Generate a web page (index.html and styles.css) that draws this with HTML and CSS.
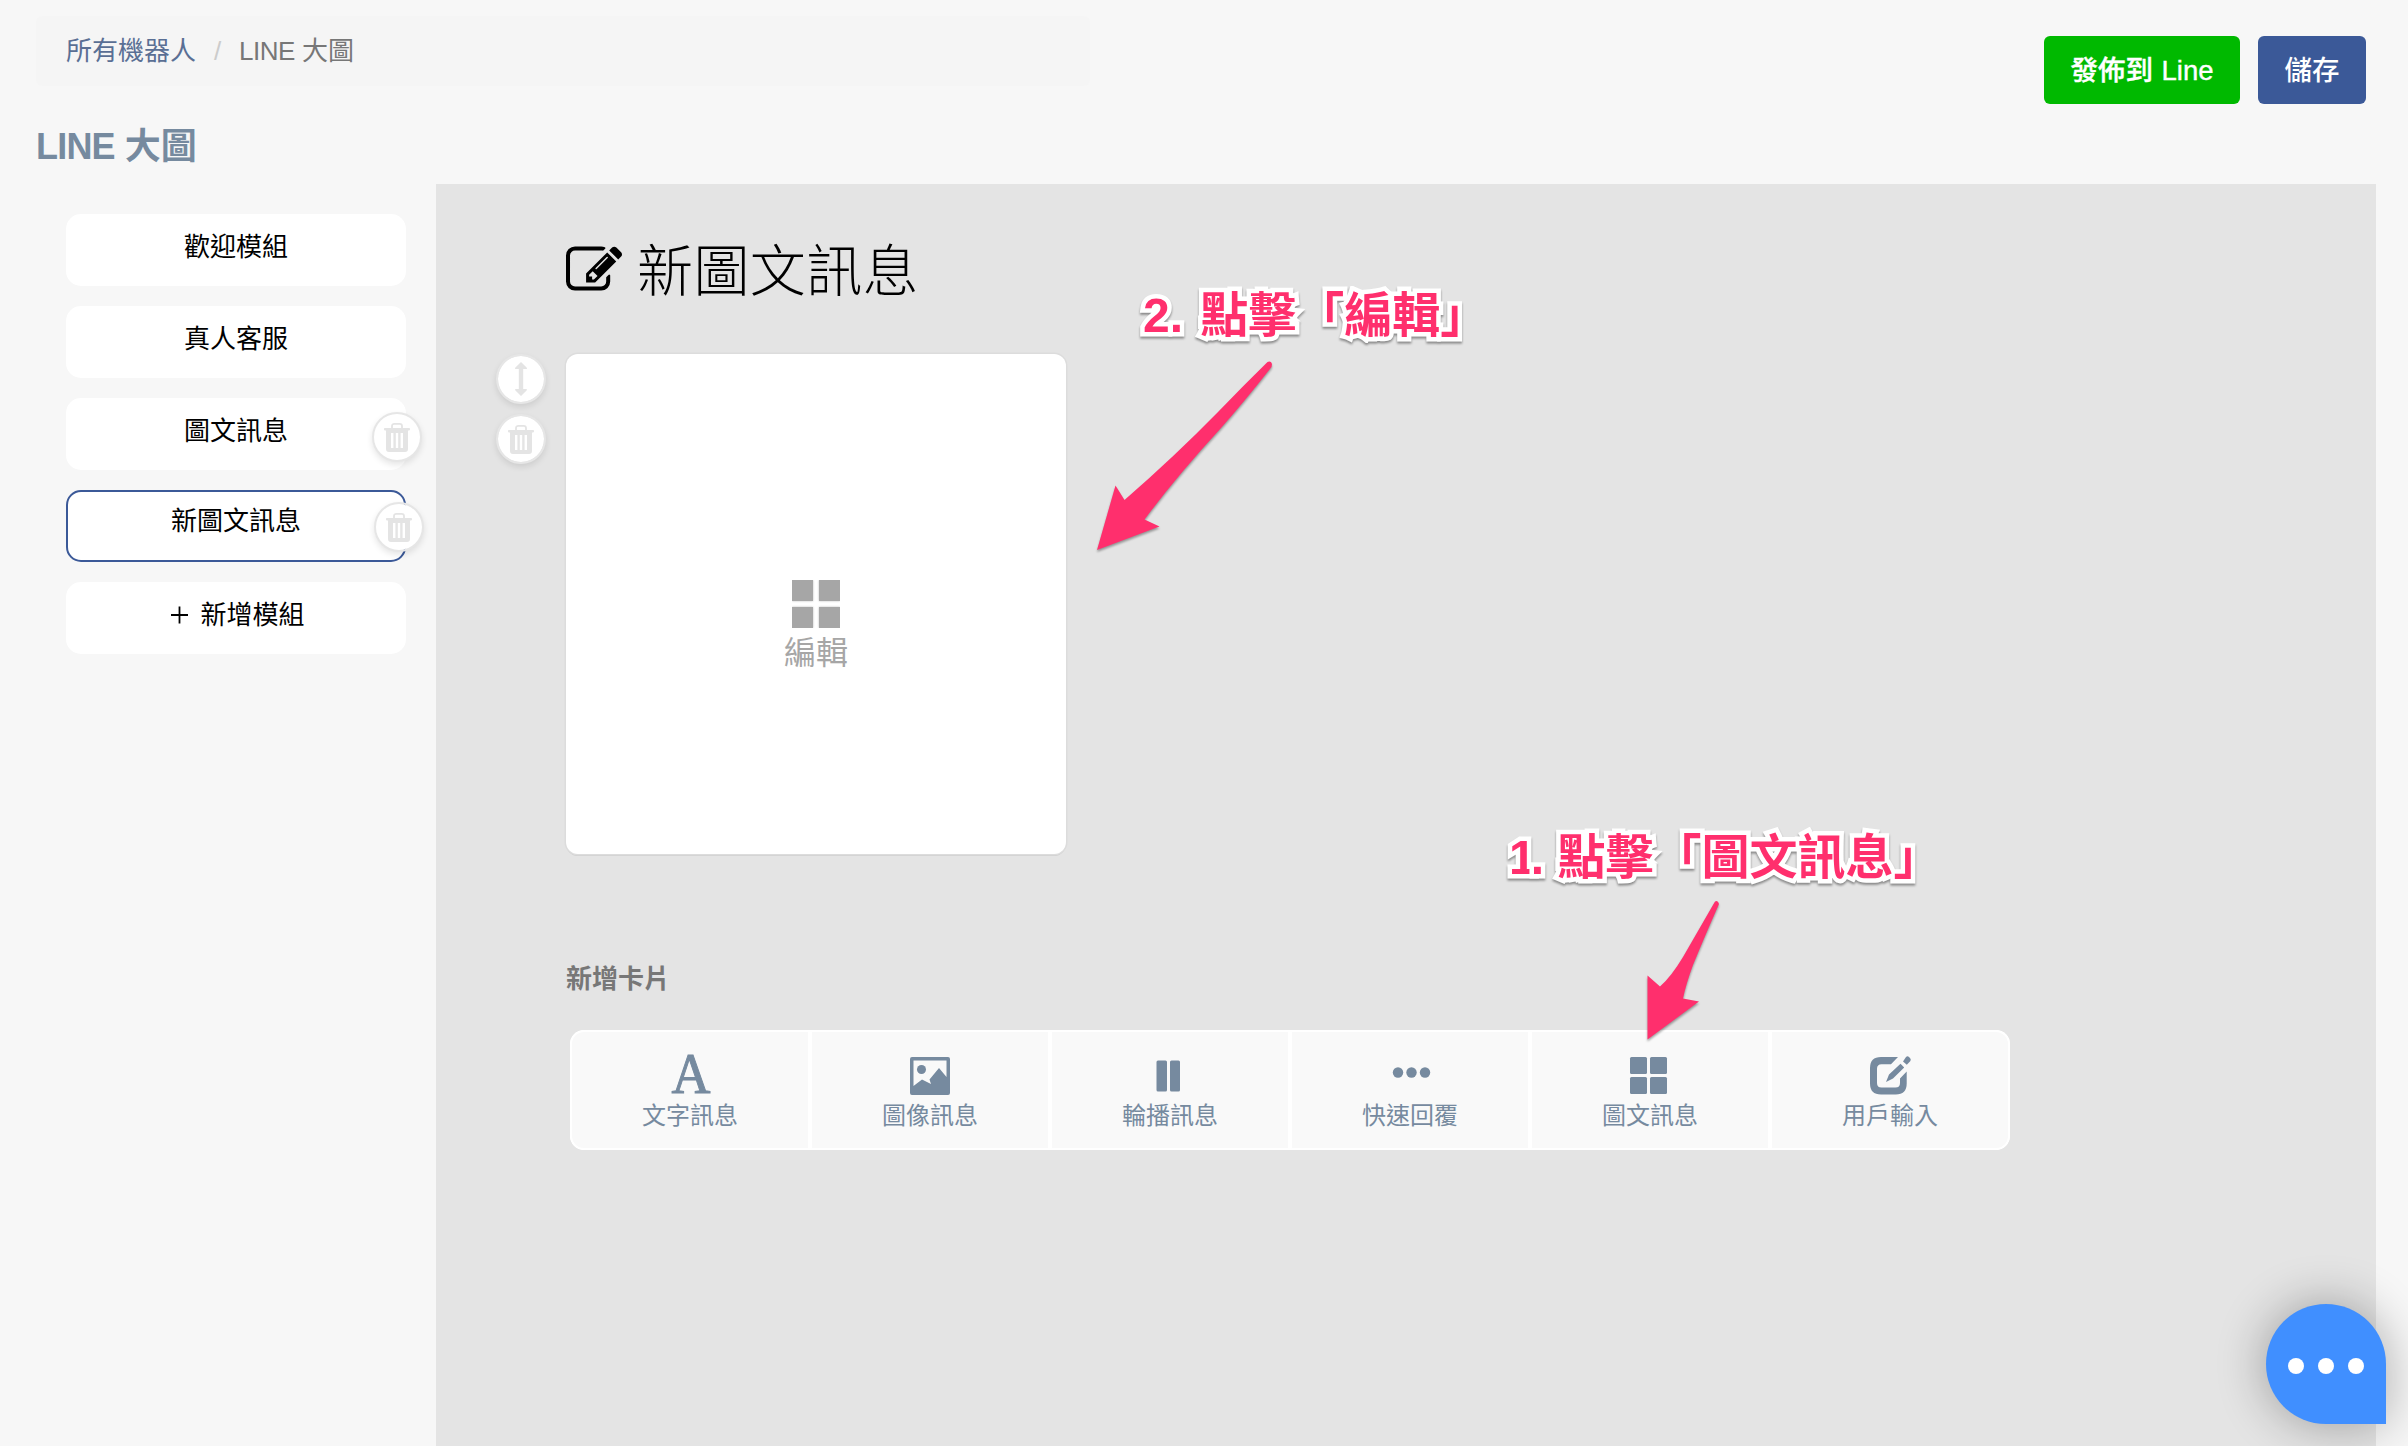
FILE: index.html
```html
<!DOCTYPE html>
<html lang="zh-Hant">
<head>
<meta charset="utf-8">
<title>LINE 大圖</title>
<link rel="stylesheet" href="styles.css">
</head>
<body>
<svg class="defs" width="0" height="0" aria-hidden="true">
  <symbol id="trash" viewBox="0 0 26 29">
    <path d="M8 5.5V3.2C8 1.6 9 .9 10.4.9h5.2C17 .9 18 1.6 18 3.2v2.3" fill="none" stroke="currentColor" stroke-width="1.8"/>
    <path fill="currentColor" fill-rule="evenodd" d="M.8 5h24.4a.8.8 0 0 1 .8.8v.8a.8.8 0 0 1-.8.8H24V26a3 3 0 0 1-3 3H5a3 3 0 0 1-3-3V7.400H.8a.8.8 0 0 1-.8-.8v-.8A.8.8 0 0 1 .8 5zM7 10v15h2.400V10zm4.800 0v15h2.400V10zm4.800 0v15H19V10z"/>
  </symbol>
</svg>
<header class="top">
  <nav class="crumbs"><a class="crumb-link">所有機器人</a><span class="sep">/</span><span><span class="latin">LINE</span> 大圖</span></nav>
  <div class="actions">
    <button class="btn btn-line">發佈到 Line</button>
    <button class="btn btn-save">儲存</button>
  </div>
</header>
<h1 class="bot-name"><span class="latin">LINE</span> 大圖</h1>
<div class="workspace">
  <aside class="modules">
    <div class="module">歡迎模組</div>
    <div class="module">真人客服</div>
    <div class="module">圖文訊息<span class="round remove"><svg class="trash"><use href="#trash"/></svg></span></div>
    <div class="module active">新圖文訊息<span class="round remove"><svg class="trash"><use href="#trash"/></svg></span></div>
    <div class="module"><svg class="plus" viewBox="0 0 18 18"><path d="M9 0v18M0 9h18" stroke="#000" stroke-width="1.900"/></svg>新增模組</div>
  </aside>
  <main class="editor">
    <h2 class="module-title">
      <svg class="title-icon" viewBox="0 128 1784 1408"><path d="M888 1184l116-116-152-152-116 116v56h96v96h56zm440-720q-16-16-33 1l-350 350q-17 17-1 33t33-1l350-350q17-17 1-33zm80 594v190q0 119-84.500 203.500t-203.500 84.500h-832q-119 0-203.500-84.500t-84.500-203.500v-832q0-119 84.500-203.500t203.500-84.500h832q63 0 117 25 15 7 18 23 3 17-9 29l-49 49q-14 14-32 8-23-6-45-6h-832q-66 0-113 47t-47 113v832q0 66 47 113t113 47h832q66 0 113-47t47-113v-126q0-13 9-22l64-64q15-15 35-7t20 29zm-96-738l288 288-672 672h-288v-288zm444 132l-92 92-288-288 92-92q28-28 68-28t68 28l152 152q28 28 28 68t-28 68z"/></svg>
      <span>新圖文訊息</span>
    </h2>
    <div class="card-row">
      <div class="tools">
        <span class="round"><svg class="move" viewBox="0 0 12 34"><path fill="currentColor" d="M6 0l5.800 5.800q.5 1.200-.6 1.200H8.200v20h3q1.100 0 .6 1.200L6 34 .2 28.200Q-.3 27 .8 27h3V7h-3Q-.3 7 .2 5.800z"/></svg></span>
        <span class="round"><svg class="trash"><use href="#trash"/></svg></span>
      </div>
      <div class="card">
        <div class="tiles"><i></i><i></i><i></i><i></i></div>
        <span>編輯</span>
      </div>
    </div>
    <h3 class="add-title">新增卡片</h3>
    <div class="card-types">
      <div class="type"><span class="glyph">A</span><span>文字訊息</span></div>
      <div class="type"><svg class="icon" viewBox="0 0 40 38"><path fill-rule="evenodd" d="M2 0h36a2 2 0 0 1 2 2v34a2 2 0 0 1-2 2H2a2 2 0 0 1-2-2V2A2 2 0 0 1 2 0zM3.500 3.500V29l8.500-6.500 9 4.500-1.500-4.500 9.500-11.500 7.500 9V3.500z"/><circle cx="11.500" cy="12.500" r="4.500"/></svg><span>圖像訊息</span></div>
      <div class="type"><svg class="icon" viewBox="0 0 40 38"><rect x="6.500" y="3.500" width="10.500" height="31" rx="1.500"/><rect x="20" y="3.500" width="10" height="31" rx="1.500"/></svg><span>輪播訊息</span></div>
      <div class="type"><svg class="icon" viewBox="0 0 40 38"><circle cx="8" cy="15.500" r="5.200"/><circle cx="21.500" cy="15.500" r="5.200"/><circle cx="35" cy="15.500" r="5.200"/></svg><span>快速回覆</span></div>
      <div class="type"><svg class="icon" viewBox="0 0 40 38"><rect x="0" y="0" width="17" height="17" rx="1.500"/><rect x="20" y="0" width="17" height="17" rx="1.500"/><rect x="0" y="20" width="17" height="17" rx="1.500"/><rect x="20" y="20" width="17" height="17" rx="1.500"/></svg><span>圖文訊息</span></div>
      <div class="type"><svg class="icon" viewBox="0 0 40 38"><path fill-rule="evenodd" d="M11 0H28L21 7.200H11.500Q7 7.200 7 11.700V26Q7 30.500 11.500 30.500H25.500Q30 30.500 30 26V21.500L36.700 14.500V26.500Q36.700 37.500 25.700 37.500H11Q0 37.500 0 26.500V11Q0 0 11 0zM16 25l3-7.500L30.500 6.800l3.700 3.700L23 21.500zM33 4.500L36 .0q1.500-1.300 3 0l1.200 1.200q1.200 1.500 0 3L36.800 7.700z"/></svg><span>用戶輸入</span></div>
    </div>
  </main>
</div>

<svg class="arrows" viewBox="0 0 2408 1446">
  <path d="M1267.500 362Q1271 360.500 1272 364L1271.500 367Q1244 402 1221 428Q1176 477 1144.500 519.500L1159.500 526.500L1097 550L1115.500 485.500L1124.500 500Q1174 457 1219 411Q1243 386 1267.500 362z"/>
  <path d="M1715 901.500Q1718 900 1719 904Q1704 938 1693 965Q1686 984 1683 998.500L1699 1001.500L1647.500 1039.500V975.500L1660 986.500Q1671 977 1683 957z"/>
</svg>
<div class="note note-edit">2. 點擊「編輯」</div>
<div class="note note-add"><span class="digit">1</span>. 點擊「圖文訊息」</div>
<div class="chat"><i></i><i></i><i></i></div>
</body>
</html>
```
FILE: styles.css
```css
* { box-sizing: border-box; }
body {
  margin: 0;
  height: 1446px;
  overflow: hidden;
  position: relative;
  display: flex;
  flex-direction: column;
  background: #f7f7f7;
  color: #000;
  font: 26px/36px "Liberation Sans", "Noto Sans CJK TC", sans-serif;
}
h1, h2, h3 { margin: 0; }
svg { display: block; }
.defs { position: absolute; }

.top {
  display: flex;
  justify-content: space-between;
  align-items: flex-start;
  height: 106px;
  padding: 16px 42px 0 36px;
}
.crumbs {
  display: flex;
  width: 1054px;
  height: 70px;
  padding: 17px 30px;
  border-radius: 6px;
  background: #f5f5f5;
  color: #777;
}
.crumb-link { color: #5a6f94; }
.latin { letter-spacing: -.5px; }
.sep { width: 43px; text-align: center; color: #ccc; }
.actions { display: flex; gap: 18px; padding-top: 20px; }
.btn {
  height: 68px;
  padding: 1px 0 0;
  border: 0;
  border-radius: 6px;
  color: #fff;
  font: 500 27.500px/67px "Liberation Sans", "Noto Sans CJK TC", sans-serif;
}
.btn-line { width: 196px; background: #00b900; word-spacing: 1px; -webkit-text-stroke: .4px #fff; }
.btn-save { width: 108px; background: #3b5998; }
.bot-name {
  height: 78px;
  padding: 16px 36px 0;
  color: #768a9f;
  font-size: 36px;
  line-height: 49px;
  font-weight: 600;
}
.bot-name .latin { letter-spacing: -.8px; }

.workspace { display: flex; flex: 1; }
.modules {
  display: flex;
  flex-direction: column;
  gap: 20px;
  width: 436px;
  padding: 30px 30px 0 66px;
}
.module {
  display: flex;
  justify-content: center;
  position: relative;
  height: 72px;
  border-radius: 15px;
  background: #fff;
  line-height: 67px;
}
.active { border: 2px solid #3b5998; line-height: 59px; }
.plus { width: 17px; height: 18px; margin: 24px 12px 0 4px; }
.round {
  display: flex;
  align-items: center;
  justify-content: center;
  width: 50px;
  height: 50px;
  border: 2px solid #e6e6e6;
  border-radius: 50%;
  background: #fff;
  background-clip: padding-box;
  color: #e4e4e4;
  box-shadow: 0 3px 6px rgba(0, 0, 0, .1);
}
.remove { position: absolute; top: 14px; right: -16px; }
.active .remove { top: 10px; right: -20px; }
.trash { width: 26px; height: 29px; margin-top: 1px; }
.move { width: 12px; height: 34px; }

.editor {
  width: 1940px;
  padding: 50px 60px 0;
  background: #e4e4e4;
}
.module-title {
  display: flex;
  gap: 15px;
  height: 120px;
  padding-left: 70px;
  font-size: 56px;
  line-height: 75px;
  font-weight: 200;
  letter-spacing: .4px;
}
.title-icon { width: 56px; height: 45px; margin-top: 12px; }
.card-row { display: flex; gap: 20px; }
.tools { display: flex; flex-direction: column; gap: 10px; width: 50px; }
.card {
  display: flex;
  flex-direction: column;
  align-items: center;
  width: 500px;
  height: 500px;
  padding-top: 226px;
  border-radius: 12px;
  background: #fff;
  color: #a6a6a6;
  font-size: 32px;
  line-height: 50px;
  box-shadow: 0 0 0 1.500px #dcdcdc, 0 2px 0 #ccc;
}
.tiles {
  display: grid;
  grid-template-columns: 21px 21px;
  gap: 6px;
  width: 48px;
  height: 48px;
  overflow: hidden;
}
.tiles i { background: #a6a6a6; box-shadow: 0 0 2px #bbb; }
.add-title {
  padding: 107px 0 0 70px;
  color: #777;
  font-size: 26px;
  line-height: 37px;
  font-weight: 600;
}
.card-types {
  display: flex;
  width: 1440px;
  height: 120px;
  margin: 32px 0 0 74px;
  overflow: hidden;
  border-radius: 14px;
  background: #fff;
}
.type {
  display: flex;
  flex-direction: column;
  align-items: center;
  width: 240px;
  padding-top: 25px;
  border: 2px solid #fff;
  background: #f9f9f9;
  color: #768a9f;
  font-size: 24px;
  line-height: 38px;
}
.type:first-child { border-radius: 14px 0 0 14px; }
.type:last-child { border-radius: 0 14px 14px 0; }
.icon { width: 40px; height: 38px; margin-bottom: 2px; fill: #768a9f; overflow: visible; }
.glyph {
  height: 40px;
  padding-left: 2px;
  font-family: "Liberation Serif", serif;
  font-size: 58px;
  line-height: 34px;
  transform: scaleX(.93);
  -webkit-text-stroke: 1px #768a9f;
}

.arrows {
  position: absolute;
  inset: 0;
  width: 2408px;
  height: 1446px;
  fill: #ff2f6d;
  filter: drop-shadow(0 2px 1px rgba(0, 0, 0, .35));
}
.note {
  position: absolute;
  color: #ff2f6d;
  font-size: 48px;
  line-height: 60px;
  font-weight: 700;
  white-space: nowrap;
  -webkit-text-stroke: 9px #fff;
  stroke-linejoin: round;
  paint-order: stroke fill;
  filter: drop-shadow(0 2px 1px rgba(0, 0, 0, .4));
}
.note-edit { left: 1143px; top: 286px; word-spacing: 4px; }
.note-add { left: 1509px; top: 828px; }
.digit { letter-spacing: -5px; }
.chat {
  position: absolute;
  left: 2266px;
  top: 1304px;
  display: flex;
  align-items: center;
  justify-content: center;
  gap: 14px;
  width: 120px;
  height: 120px;
  padding-top: 4px;
  border-radius: 60px 60px 0 60px;
  background: #408fff;
  box-shadow: 0 0 50px rgba(0, 0, 0, .32);
}
.chat i { width: 16px; height: 16px; border-radius: 50%; background: #fff; }
```
